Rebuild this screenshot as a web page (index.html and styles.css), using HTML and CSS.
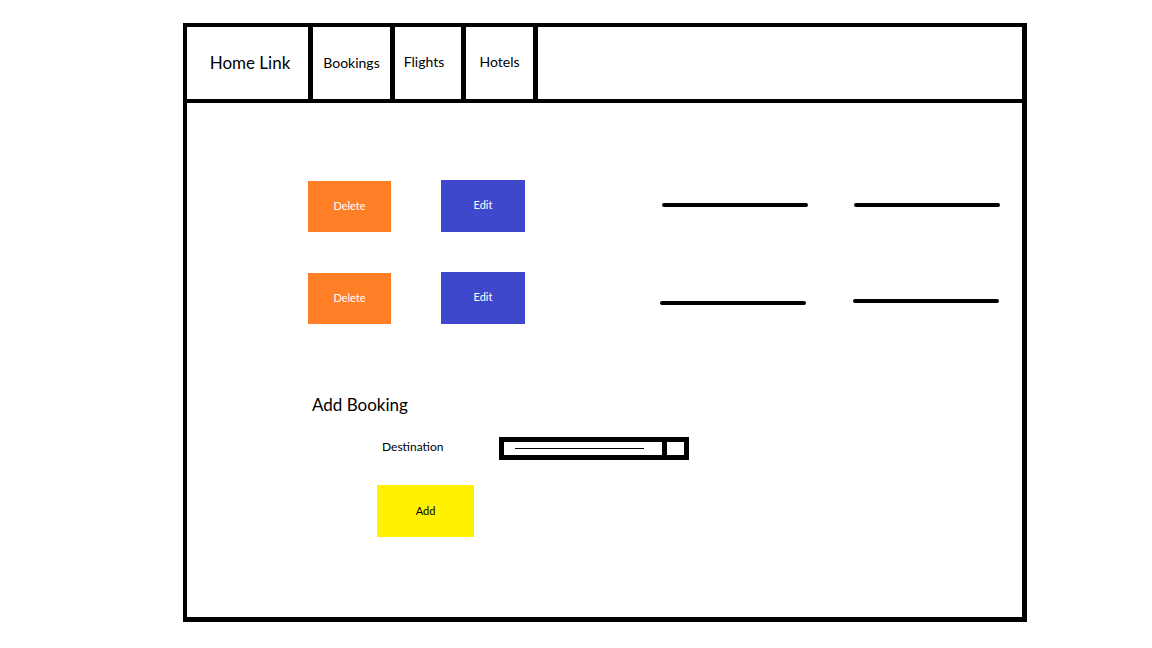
FILE: index.html
```html
<!DOCTYPE html>
<html lang="en">
<head>
    <meta charset="UTF-8">
    <meta name="viewport" content="width=device-width, initial-scale=1.0">
    <title>Bookings</title>
    <link rel="stylesheet" href="styles.css">
</head>
<body>
    <div class="frame">
        <nav class="nav">
            <a class="home" href="#">Home Link</a>
            <a class="bookings" href="#">Bookings</a>
            <a class="flights" href="#">Flights</a>
            <a class="hotels" href="#">Hotels</a>
        </nav>

        <main class="content">
            <div class="booking first">
                <button class="btn delete">Delete</button>
                <button class="btn edit">Edit</button>
                <span class="line a"></span>
                <span class="line b"></span>
            </div>

            <div class="booking second">
                <button class="btn delete">Delete</button>
                <button class="btn edit">Edit</button>
                <span class="line a"></span>
                <span class="line b"></span>
            </div>

            <h2 class="add-title">Add Booking</h2>

            <div class="form-row">
                <label class="form-label">Destination</label>
                <div class="select">
                    <div class="select-field"><span class="select-text"></span></div>
                    <div class="select-arrow"></div>
                </div>
            </div>

            <button class="btn add">Add</button>
        </main>
    </div>
</body>
</html>
```

FILE: styles.css
```css
body {
    margin: 0;
    padding: 23px 0 0 183px;
    background: white;
    font-family: Lato, "Open Sans", sans-serif;
    color: #000;
}
.frame {
    width: 844px;
    height: 599px;
    box-sizing: border-box;
    border: 4px solid #000;
    border-width: 4px 5px 5px 4px;
}
.nav {
    display: flex;
    height: 76px;
    box-sizing: border-box;
    border-bottom: 4px solid #000;
}
.nav a {
    display: flex;
    align-items: center;
    justify-content: center;
    box-sizing: border-box;
    border-right: 5px solid #000;
    color: #000;
    text-decoration: none;
    font-size: 14px;
    padding-bottom: 1px;
}
.nav .home { width: 126px; font-size: 17px; padding-left: 5px; }
.nav .bookings { width: 82px; }
.nav .flights { width: 71px; padding-right: 8px; padding-bottom: 4px; }
.nav .hotels { width: 72px; padding-bottom: 4px; }

.content {
    padding: 77px 0 0 121px;
}
.booking {
    display: flex;
    align-items: flex-start;
    height: 52px;
}
.booking.second {
    margin-top: 40px;
}
.btn {
    border: none;
    padding: 0;
    font-family: Lato, "Open Sans", sans-serif;
    font-size: 11px;
    cursor: pointer;
}
.delete {
    width: 83px;
    height: 51px;
    margin-top: 1px;
    padding-bottom: 2px;
    background: #ff7f27;
    color: white;
}
.edit {
    width: 84px;
    height: 52px;
    margin-left: 50px;
    padding-bottom: 4px;
    background: #3f48cc;
    color: white;
}
.line {
    width: 146px;
    height: 4px;
    border-radius: 2px;
    background: #000;
}
.first .line { margin-top: 23px; }
.first .line.a { margin-left: 137px; }
.first .line.b { margin-left: 46px; }
.second .line.a { margin-top: 29px; margin-left: 135px; }
.second .line.b { margin-top: 27px; margin-left: 47px; }

.add-title {
    margin: 71px 0 0 4px;
    font-size: 17px;
    font-weight: normal;
    line-height: 20px;
}
.form-row {
    display: flex;
    align-items: center;
    margin: 22px 0 0 74px;
    height: 23px;
}
.form-label {
    width: 117px;
    flex: none;
    font-size: 12px;
    padding-bottom: 5px;
}
.select {
    display: flex;
    width: 190px;
    height: 23px;
    box-sizing: border-box;
    border: 5px solid #000;
}
.select-field {
    width: 158px;
    display: flex;
    align-items: center;
    padding-left: 11px;
    box-sizing: border-box;
}
.select-text {
    width: 129px;
    height: 1px;
    background: #000;
}
.select-arrow {
    flex: 1;
    border-left: 5px solid #000;
}
.add {
    display: block;
    width: 97px;
    height: 52px;
    margin: 25px 0 0 69px;
    padding-bottom: 1px;
    background: #fff200;
    color: #000;
}
```
